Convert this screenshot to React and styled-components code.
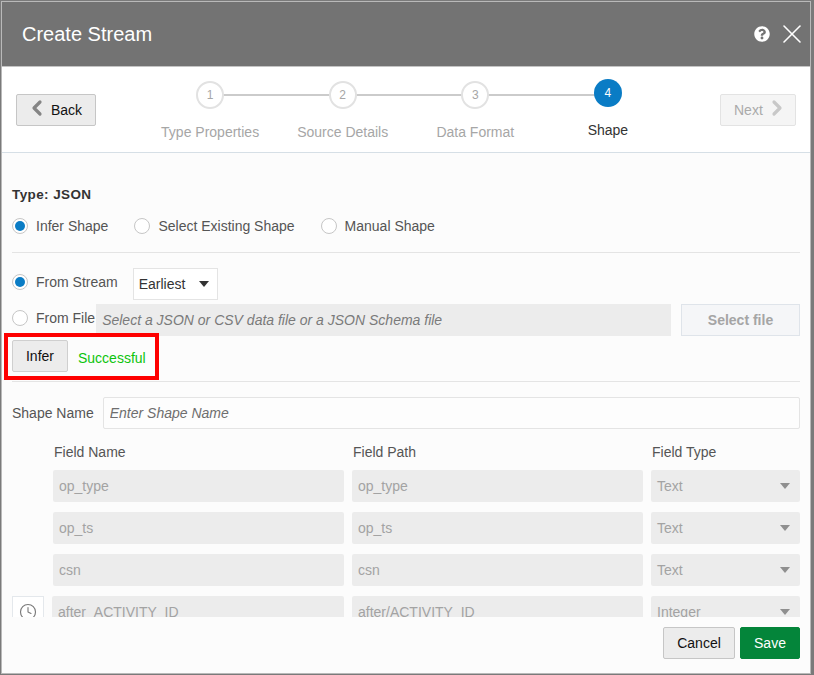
import React from 'react';
import styled, { createGlobalStyle } from 'styled-components';
import { ChevronLeft, ChevronRight, Clock, X } from 'lucide-react';
import { FaQuestionCircle } from 'react-icons/fa';

const GlobalStyle = createGlobalStyle`
  html, body {
    margin: 0;
    padding: 0;
    background: #7a7a7a;
    font-family: "Liberation Sans", Arial, sans-serif;
    font-size: 14px;
  }
  * {
    box-sizing: border-box;
  }
`;

const StyledPage = styled.div`
  width: 814px;
  height: 675px;
  padding: 1px 3px 1px 1px;
  overflow: hidden;
`;

const StyledDialog = styled.div`
  display: flex;
  flex-direction: column;
  width: 810px;
  height: 673px;
  border: 1px solid #b9b9b9;
  background: #fcfcfc;
`;

const StyledHeader = styled.header`
  display: flex;
  align-items: center;
  justify-content: space-between;
  flex: none;
  height: 65px;
  padding: 0 2px 0 20px;
  background: #737373;
  border-bottom: 1px solid #c4c4c4;
  color: #fff;
`;

const StyledTitle = styled.h1`
  margin: 0;
  font-size: 20px;
  font-weight: normal;
`;

const StyledHeaderIcons = styled.div`
  display: flex;
  align-items: center;
  gap: 6px;
`;

const StyledTrainBar = styled.div`
  display: flex;
  align-items: center;
  justify-content: space-between;
  flex: none;
  height: 86px;
  padding: 0 14px;
  background: #fff;
  border-bottom: 1px solid #d6dfe6;
`;

const StyledNavButton = styled.button`
  display: flex;
  align-items: center;
  gap: 2px;
  width: ${(p) => p.$width}px;
  height: 32px;
  padding: 0 0 0 ${(p) => p.$pad}px;
  border: 1px solid ${(p) => (p.disabled ? '#e3e3e3' : '#c6c6c6')};
  border-radius: 2px;
  background: ${(p) => (p.disabled ? '#f5f5f5' : '#ececec')};
  color: ${(p) => (p.disabled ? '#aaa' : '#111')};
  font: 14px "Liberation Sans", Arial, sans-serif;

  svg {
    flex: none;
    margin-top: -3px;
    color: ${(p) => (p.disabled ? '#c8c8c8' : '#858585')};
  }
`;

const StyledTrain = styled.div`
  display: flex;
  height: 58px;
  margin-left: 2px;
`;

const StyledStep = styled.div`
  position: relative;
  display: flex;
  flex-direction: column;
  align-items: center;
  width: 132.6px;
  color: ${(p) => (p.$active ? '#333' : '#a6a6a6')};

  &:not(:first-child)::before {
    content: '';
    position: absolute;
    top: 13px;
    left: -50%;
    width: 100%;
    height: 2px;
    background: #cbcbcb;
  }
`;

const StyledStepCircle = styled.div`
  position: relative;
  z-index: 1;
  display: flex;
  align-items: center;
  justify-content: center;
  flex: none;
  width: 28px;
  height: 28px;
  margin-top: ${(p) => (p.$active ? '-2px' : '0')};
  margin-bottom: 15px;
  border: ${(p) => (p.$active ? 'none' : '2px solid #e2e2e2')};
  border-radius: 50%;
  background: ${(p) => (p.$active ? '#0a7cc5' : '#fff')};
  color: ${(p) => (p.$active ? '#fff' : '#a6a6a6')};
  font-size: 12px;
`;

const StyledStepLabel = styled.div`
  line-height: 16px;
`;

const StyledScroll = styled.div`
  flex: 1;
  min-height: 0;
  overflow: hidden;
  padding: 0 10px;
  color: #555;
`;

const StyledType = styled.div`
  margin-top: 34px;
  color: #333;
  font-size: 13.5px;
  font-weight: bold;
  letter-spacing: 0.4px;
  line-height: 16px;
`;

const StyledRadioRow = styled.div`
  display: flex;
  gap: 26px;
  margin-top: 15px;
`;

const StyledRadioLabel = styled.label`
  display: flex;
  align-items: center;
  gap: 8px;
  height: 16px;
  white-space: nowrap;
`;

const StyledRadio = styled.span`
  display: flex;
  flex: none;
  align-items: center;
  justify-content: center;
  width: 16px;
  height: 16px;
  border: 1px solid #c6c6c6;
  border-radius: 50%;
  background: #fff;

  &::after {
    content: '';
    display: ${(p) => (p.$checked ? 'block' : 'none')};
    width: 10px;
    height: 10px;
    border-radius: 50%;
    background: #0a7cc5;
  }
`;

const StyledDivider = styled.hr`
  height: 1px;
  margin: ${(p) => p.$margin};
  border: 0;
  background: #e4e4e4;
`;

const StyledSourceRow = styled.div`
  display: flex;
  align-items: flex-start;
  height: 32px;
  margin-top: ${(p) => p.$top}px;

  ${StyledRadioLabel} {
    margin-top: 6px;
  }
`;

const StyledSelect = styled.div`
  display: flex;
  align-items: center;
  justify-content: space-between;
  width: 85px;
  height: 32px;
  margin-left: 15px;
  padding: 0 8px 0 5px;
  border: 1px solid #e4e4e4;
  background: #fff;
  color: #333;
`;

const StyledCaret = styled.span`
  width: 0;
  height: 0;
  border-left: 5px solid transparent;
  border-right: 5px solid transparent;
  border-top: 6px solid ${(p) => p.$color};
`;

const StyledFileInput = styled.input`
  flex: 1;
  height: 32px;
  margin: 0 10px 0 1px;
  padding: 0 6px;
  border: 0;
  background: #ececec;
  font: italic 14px "Liberation Sans", Arial, sans-serif;

  &::placeholder {
    color: #7a7a7a;
    opacity: 1;
  }
`;

const StyledSelectFile = styled.button`
  width: 119px;
  height: 32px;
  padding: 0;
  border: 1px solid #dfe4ea;
  background: #f5f6f8;
  color: #a5a5a5;
  font: bold 14px "Liberation Sans", Arial, sans-serif;
`;

const StyledInferRow = styled.div`
  position: relative;
  display: flex;
  align-items: center;
  gap: 10px;
  margin-top: 4px;
`;

const StyledHighlight = styled.div`
  position: absolute;
  top: -7px;
  left: -8px;
  width: 155px;
  height: 47px;
  border: 4px solid #fe0000;
`;

const StyledInfer = styled.button`
  width: 56px;
  height: 32px;
  padding: 0;
  border: 1px solid #cfcfcf;
  border-radius: 2px;
  background: #ececec;
  color: #111;
  font: 14px "Liberation Sans", Arial, sans-serif;
`;

const StyledSuccess = styled.span`
  position: relative;
  top: 2px;
  color: #0cc40c;
`;

const StyledNameRow = styled.div`
  display: flex;
  align-items: center;
  gap: 9px;
`;

const StyledNameInput = styled.input`
  flex: 1;
  height: 32px;
  padding: 0 6px;
  border: 1px solid #e4e4e4;
  border-radius: 2px;
  background: #fdfdfd;
  font: italic 14px "Liberation Sans", Arial, sans-serif;

  &::placeholder {
    color: #6e6e6e;
    opacity: 1;
  }
`;

const StyledGrid = styled.div`
  display: grid;
  grid-template-columns: 33px 291px 291px 149px;
  column-gap: 8px;
  row-gap: 10px;
  margin-top: 15px;
`;

const StyledColumnHead = styled.div`
  grid-column: ${(p) => p.$column};
  height: 16px;
  padding-left: 1px;
  line-height: 16px;
`;

const StyledFieldInput = styled.input`
  width: ${(p) => (p.$wide ? 'calc(100% + 1px)' : '100%')};
  height: 32px;
  margin-left: ${(p) => (p.$wide ? '-1px' : '0')};
  padding: 0 6px;
  border: 0;
  border-radius: 2px;
  background: #ececec;
  color: #a3a3a3;
  font: 14px "Liberation Sans", Arial, sans-serif;
`;

const StyledFieldSelect = styled.div`
  display: flex;
  align-items: center;
  justify-content: space-between;
  height: 32px;
  padding: 0 10px 0 6px;
  border-radius: 2px;
  background: #ececec;
  color: #a3a3a3;
`;

const StyledTimeButton = styled.div`
  display: flex;
  align-items: center;
  justify-content: center;
  width: 32px;
  height: 32px;
  border: 1px solid #e4e8ec;
  background: #fff;
  color: #7a7a7a;
`;

const StyledFooter = styled.footer`
  display: flex;
  justify-content: flex-end;
  flex: none;
  gap: 5px;
  height: 56px;
  padding: 10px 10px 0 0;
`;

const StyledFooterButton = styled.button`
  width: ${(p) => p.$width}px;
  height: 32px;
  padding: 0;
  border: 1px solid ${(p) => (p.$primary ? '#04853a' : '#c6c6c6')};
  border-radius: 2px;
  background: ${(p) => (p.$primary ? '#04853a' : '#ececec')};
  color: ${(p) => (p.$primary ? '#fff' : '#111')};
  font: 14px "Liberation Sans", Arial, sans-serif;
`;

const steps = ['Type Properties', 'Source Details', 'Data Format', 'Shape'];

const fields = [
  { name: 'op_type', path: 'op_type', type: 'Text' },
  { name: 'op_ts', path: 'op_ts', type: 'Text' },
  { name: 'csn', path: 'csn', type: 'Text' },
  { name: 'after_ACTIVITY_ID', path: 'after/ACTIVITY_ID', type: 'Integer', time: true },
];

function App() {
  return (
    <StyledPage>
      <GlobalStyle />
      <StyledDialog>
        <StyledHeader>
          <StyledTitle>Create Stream</StyledTitle>
          <StyledHeaderIcons>
            <FaQuestionCircle size={16} />
            <X size={32} strokeWidth={1.2} />
          </StyledHeaderIcons>
        </StyledHeader>

        <StyledTrainBar>
          <StyledNavButton $width={80} $pad={8}>
            <ChevronLeft size={24} strokeWidth={3.2} />
            Back
          </StyledNavButton>
          <StyledTrain>
            {steps.map((step, i) => (
              <StyledStep key={step} $active={i === 3}>
                <StyledStepCircle $active={i === 3}>{i + 1}</StyledStepCircle>
                <StyledStepLabel>{step}</StyledStepLabel>
              </StyledStep>
            ))}
          </StyledTrain>
          <StyledNavButton $width={76} $pad={13} disabled>
            Next
            <ChevronRight size={24} strokeWidth={3.2} />
          </StyledNavButton>
        </StyledTrainBar>

        <StyledScroll>
          <StyledType>Type: JSON</StyledType>
          <StyledRadioRow>
            <StyledRadioLabel>
              <StyledRadio $checked />
              Infer Shape
            </StyledRadioLabel>
            <StyledRadioLabel>
              <StyledRadio />
              Select Existing Shape
            </StyledRadioLabel>
            <StyledRadioLabel>
              <StyledRadio />
              Manual Shape
            </StyledRadioLabel>
          </StyledRadioRow>
          <StyledDivider $margin="18px 0 15px" />

          <StyledSourceRow $top={0}>
            <StyledRadioLabel>
              <StyledRadio $checked />
              From Stream
            </StyledRadioLabel>
            <StyledSelect>
              Earliest
              <StyledCaret $color="#333" />
            </StyledSelect>
          </StyledSourceRow>
          <StyledSourceRow $top={4}>
            <StyledRadioLabel>
              <StyledRadio />
              From File
            </StyledRadioLabel>
            <StyledFileInput readOnly placeholder="Select a JSON or CSV data file or a JSON Schema file" />
            <StyledSelectFile>Select file</StyledSelectFile>
          </StyledSourceRow>

          <StyledInferRow>
            <StyledInfer>Infer</StyledInfer>
            <StyledSuccess>Successful</StyledSuccess>
            <StyledHighlight />
          </StyledInferRow>
          <StyledDivider $margin="9px 0 15px" />

          <StyledNameRow>
            Shape Name
            <StyledNameInput readOnly placeholder="Enter Shape Name" />
          </StyledNameRow>

          <StyledGrid>
            <StyledColumnHead $column={2}>Field Name</StyledColumnHead>
            <StyledColumnHead $column={3}>Field Path</StyledColumnHead>
            <StyledColumnHead $column={4}>Field Type</StyledColumnHead>
            {fields.map((field) => (
              <React.Fragment key={field.name}>
                <div>
                  {field.time && (
                    <StyledTimeButton>
                      <Clock size={18} strokeWidth={1.5} />
                    </StyledTimeButton>
                  )}
                </div>
                <StyledFieldInput readOnly value={field.name} $wide={field.time} />
                <StyledFieldInput readOnly value={field.path} />
                <StyledFieldSelect>
                  {field.type}
                  <StyledCaret $color="#8f8f8f" />
                </StyledFieldSelect>
              </React.Fragment>
            ))}
          </StyledGrid>
        </StyledScroll>

        <StyledFooter>
          <StyledFooterButton $width={72}>Cancel</StyledFooterButton>
          <StyledFooterButton $width={60} $primary>Save</StyledFooterButton>
        </StyledFooter>
      </StyledDialog>
    </StyledPage>
  );
}

export default App;
